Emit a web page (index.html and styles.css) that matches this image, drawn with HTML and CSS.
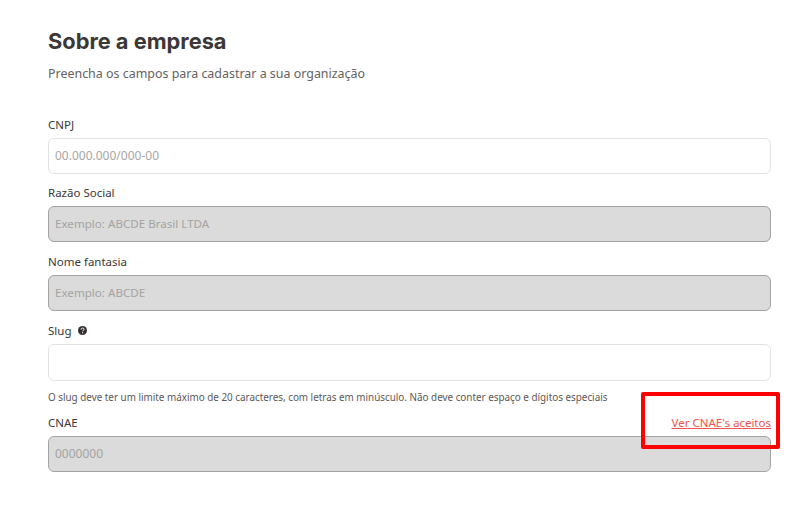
FILE: index.html
```html
<!DOCTYPE html>
<html lang="pt-BR">
<head>
    <meta charset="UTF-8">
    <title>Sobre a empresa</title>
    <link rel="stylesheet" href="styles.css">
</head>
<body>
    <main class="company-form">
        <h1 class="title">Sobre a empresa</h1>
        <p class="subtitle">Preencha os campos para cadastrar a sua organização</p>

        <div class="field first">
            <label class="label">CNPJ</label>
            <div class="input digits">00.000.000/000-00</div>
        </div>
        <div class="field tight">
            <label class="label">Razão Social</label>
            <div class="input disabled">Exemplo: ABCDE Brasil LTDA</div>
        </div>
        <div class="field">
            <label class="label">Nome fantasia</label>
            <div class="input disabled">Exemplo: ABCDE</div>
        </div>
        <div class="field">
            <label class="label">
                Slug
                <svg class="help" width="9" height="9" viewBox="0 0 10 10">
                    <circle cx="5" cy="5" r="5" fill="#33302f"/>
                    <path d="M3.4 3.9c0-1 .7-1.6 1.7-1.6s1.6.6 1.6 1.4c0 1.2-1.6 1.2-1.6 2.2" fill="none" stroke="#fff" stroke-width="1.1"/>
                    <rect x="4.5" y="6.9" width="1.2" height="1.2" fill="#fff"/>
                </svg>
            </label>
            <div class="input tall"></div>
            <p class="hint">O slug deve ter um limite máximo de 20 caracteres, com letras em minúsculo. Não deve conter espaço e dígitos especiais</p>
        </div>
        <div class="field cnae">
            <div class="label-row">
                <label class="label">CNAE</label>
                <a class="link" href="#">Ver CNAE's aceitos</a>
            </div>
            <div class="input disabled digits">0000000</div>
        </div>
    </main>
    <div class="highlight"></div>
</body>
</html>
```

FILE: styles.css
```css
body {
    margin: 0;
    background: #fff;
    font-family: "Noto Sans", sans-serif;
    color: #3b3837;
    height: 516px;
    overflow: hidden;
    position: relative;
}

.company-form {
    width: 723px;
    padding: 26px 0 0 48px;
}

.title {
    margin: 0;
    font-family: Inter, sans-serif;
    font-size: 21.8px;
    line-height: 30px;
    font-weight: 700;
    color: #3b3837;
}

.subtitle {
    margin: 9px 0 0;
    font-size: 12.45px;
    line-height: 18px;
    color: #66625f;
}

.field {
    margin-top: 12px;
}

.field.first {
    margin-top: 34px;
}

.field.tight {
    margin-top: 11px;
}

.field.cnae {
    margin-top: 10px;
}

.label {
    display: block;
    font-size: 11.5px;
    line-height: 16px;
    color: #3b3837;
    margin-bottom: 5px;
}

.help {
    margin-left: 4px;
}

.label-row {
    display: flex;
    justify-content: space-between;
    align-items: flex-end;
}

.input {
    box-sizing: border-box;
    height: 36px;
    border: 1px solid #e2e2e2;
    border-radius: 6px;
    padding: 0 6px;
    font-size: 11.6px;
    line-height: 34px;
    color: #a8a6a4;
    background: #fff;
}

.input.digits {
    font-size: 12px;
}

.input.tall {
    height: 37px;
}

.input.disabled {
    background: #dbdbdb;
    border-color: #a3a3a3;
    color: #a5a3a1;
}

.hint {
    margin: 8px 0 0;
    font-size: 9.87px;
    line-height: 16px;
    color: #5c5856;
}

.link {
    font-size: 11.5px;
    line-height: 16px;
    margin-bottom: 5px;
    color: #f0544c;
}

.highlight {
    position: absolute;
    left: 641px;
    top: 392px;
    width: 131px;
    height: 49px;
    border: 4px solid #fe0000;
    border-radius: 2px;
}
```
